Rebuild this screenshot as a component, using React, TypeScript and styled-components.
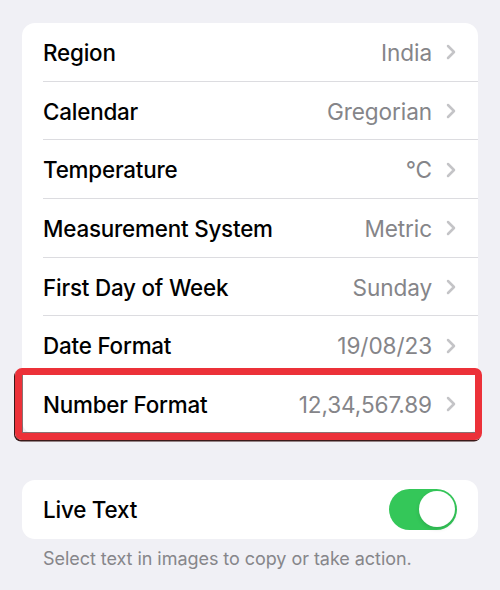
import React from "react";
import styled, { createGlobalStyle } from "styled-components";

const Global = createGlobalStyle`
  html, body { margin: 0; padding: 0; background: #f0f0f5; }
  body { font-family: Inter, "Noto Sans", "Liberation Sans", sans-serif; -webkit-font-smoothing: antialiased; }
`;

const Page = styled.div`
  width: 500px;
  height: 590px;
  background: #f0f0f5;
  padding: 23px 22px 0;
  box-sizing: border-box;
  display: flex;
  flex-direction: column;
`;

const Card = styled.div`
  background: #ffffff;
  border-radius: 13px;
  display: flex;
  flex-direction: column;
`;

const Row = styled.div<{ $last?: boolean; $highlight?: boolean }>`
  position: relative;
  height: 58.7px;
  display: flex;
  align-items: center;
  padding: 0 22px 0 21px;
  box-sizing: border-box;
  &::after {
    content: "";
    display: ${(p) => (p.$last ? "none" : "block")};
    position: absolute;
    left: 21px;
    right: 0;
    bottom: 0;
    height: 1px;
    background: #dcdce0;
  }
  &::before {
    content: "";
    display: ${(p) => (p.$highlight ? "block" : "none")};
    position: absolute;
    left: -7px;
    right: -4px;
    top: -7px;
    bottom: -6px;
    border: 7.5px solid #ec3139;
    border-radius: 7px;
    box-shadow: -1px 1.5px 0 #3a1a1a, inset 1px -1px 0 rgba(60, 20, 20, 0.6);
    pointer-events: none;
  }
`;

const Label = styled.span`
  flex: 1;
  font-size: 22.4px;
  font-weight: 500;
  color: #000000;
  letter-spacing: -0.2px;
`;

const Value = styled.span`
  font-size: 22.6px;
  font-weight: 400;
  color: #858589;
  letter-spacing: -0.1px;
`;

const Chevron = styled.svg`
  width: 10px;
  height: 16px;
  margin-left: 14px;
  flex: none;
`;

const Gap = styled.div`
  height: 46px;
`;

const Toggle = styled.div<{ $on: boolean }>`
  width: 68px;
  height: 41px;
  border-radius: 21px;
  background: ${(p) => (p.$on ? "#34c759" : "#e9e9ea")};
  padding: 2.5px;
  box-sizing: border-box;
  display: flex;
  justify-content: ${(p) => (p.$on ? "flex-end" : "flex-start")};
  margin-right: -1px;
`;

const Knob = styled.div`
  width: 36px;
  height: 36px;
  border-radius: 50%;
  background: #ffffff;
  box-shadow: 0 2px 4px rgba(0, 0, 0, 0.12);
`;

const Footer = styled.div`
  padding: 9px 0 0 21px;
  font-size: 18px;
  color: #86868a;
  letter-spacing: -0.05px;
`;

const ChevronIcon = () => (
  <Chevron viewBox="0 0 10 16" fill="none">
    <path d="M2 2 L8 8 L2 14" stroke="#c4c4c7" strokeWidth="2.5" strokeLinecap="round" strokeLinejoin="round" />
  </Chevron>
);

const rows = [
  { label: "Region", value: "India" },
  { label: "Calendar", value: "Gregorian" },
  { label: "Temperature", value: "°C" },
  { label: "Measurement System", value: "Metric" },
  { label: "First Day of Week", value: "Sunday" },
  { label: "Date Format", value: "19/08/23" },
  { label: "Number Format", value: "12,34,567.89", highlight: true },
];

export default function App() {
  return (
    <>
      <Global />
      <Page>
        <Card>
          {rows.map((r, i) => (
            <Row key={r.label} $last={i === rows.length - 1} $highlight={r.highlight}>
              <Label>{r.label}</Label>
              <Value>{r.value}</Value>
              <ChevronIcon />
            </Row>
          ))}
        </Card>
        <Gap />
        <Card>
          <Row $last>
            <Label>Live Text</Label>
            <Toggle $on>
              <Knob />
            </Toggle>
          </Row>
        </Card>
        <Footer>Select text in images to copy or take action.</Footer>
      </Page>
    </>
  );
}
